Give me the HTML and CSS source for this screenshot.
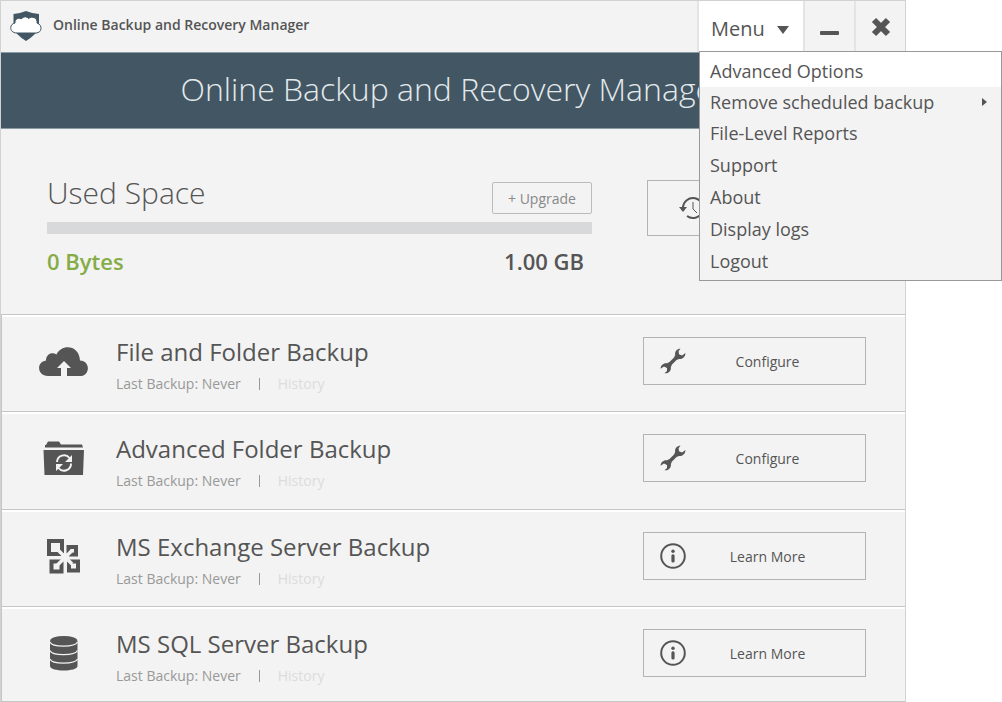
FILE: index.html
```html
<!DOCTYPE html>
<html lang="en">
<head>
<meta charset="utf-8">
<title>Online Backup and Recovery Manager</title>
<link rel="stylesheet" href="styles.css">
</head>
<body>
<svg class="defs" aria-hidden="true">
  <symbol id="wrench" viewBox="0 0 26 26">
    <path d="M20.500 .5 C17 .8 14.500 3.500 15.200 7 L14 9.500 L9.500 14 L7 15.200 C3.500 14.700 .8 17 .5 20.800 L4 18.600 L7 20 L7 23 L4.500 25.300 C8.500 25.800 11.300 23 10.900 19 L12 16.500 L16.500 12 L19 10.900 C22.500 11.500 25.300 9 25.500 5 L22 7.500 L19 6.200 L18.600 3.200 Z" fill="currentColor"/>
  </symbol>
  <symbol id="info" viewBox="0 0 26 26">
    <circle cx="13" cy="13" r="11.800" fill="none" stroke="currentColor" stroke-width="2"/>
    <circle cx="13" cy="8.300" r="1.700" fill="currentColor"/>
    <rect x="11.400" y="11.200" width="3.200" height="8.300" rx="1.500" fill="currentColor"/>
  </symbol>
</svg>

<div class="window">
  <header class="titlebar">
    <svg class="logo" viewBox="0 0 32 32" aria-hidden="true">
      <path d="M3.500 4 Q10 3.500 16 1 Q22 3.500 29 4 L29 18 Q27 24 16 31 Q5 24 3.500 18 Z" fill="#425763"/>
      <path d="M7 23 C-1 23 -1 14 5 13 C4.500 9 9 7 11 9 C14 6 17 6.500 18.500 8.500 C22 5.500 28 8 27 13 C33 15 32 23 26 23 Z" fill="#fff" stroke="#425763" stroke-width="1"/>
    </svg>
    <h1 class="app-name">Online Backup and Recovery Manager</h1>
    <div class="menu">
      <button class="menu-button" type="button" aria-expanded="true">Menu
        <svg class="caret" viewBox="0 0 12 8" aria-hidden="true"><path d="M0 0 H12 L6 8 Z" fill="currentColor"/></svg>
      </button>
      <ul class="menu-list">
        <li><button class="menu-item active" type="button">Advanced Options</button></li>
        <li><button class="menu-item submenu" type="button">Remove scheduled backup
          <svg class="arrow" viewBox="0 0 5 8" aria-hidden="true"><path d="M0 0 L5 4 L0 8 Z" fill="currentColor"/></svg></button></li>
        <li><button class="menu-item" type="button">File-Level Reports</button></li>
        <li><button class="menu-item" type="button">Support</button></li>
        <li><button class="menu-item" type="button">About</button></li>
        <li><button class="menu-item" type="button">Display logs</button></li>
        <li><button class="menu-item" type="button">Logout</button></li>
      </ul>
    </div>
    <button class="window-button" type="button" aria-label="Minimize">
      <svg viewBox="0 0 20 20" aria-hidden="true"><rect x="0" y="14" width="19" height="4" rx="1" fill="currentColor"/></svg>
    </button>
    <button class="window-button" type="button" aria-label="Close">
      <svg viewBox="0 0 20 20" aria-hidden="true"><path d="M3 3 L17 17 M17 3 L3 17" stroke="currentColor" stroke-width="6"/></svg>
    </button>
  </header>

  <div class="banner">Online Backup and Recovery Manager</div>

  <section class="usage">
    <div class="meter">
      <div class="meter-head">
        <h2 class="meter-title">Used Space</h2>
        <button class="upgrade" type="button">+ Upgrade</button>
      </div>
      <div class="track"></div>
      <div class="meter-values"><span class="used">0 Bytes</span><span class="total">1.00 GB</span></div>
    </div>
    <button class="restore" type="button" aria-label="Restore">
      <svg viewBox="0 0 26 24" aria-hidden="true">
        <path d="M4 12 A10 10 0 1 1 8 20" fill="none" stroke="currentColor" stroke-width="2"/>
        <path d="M0 11 H8 L4 16 Z" fill="currentColor"/>
        <path d="M14 6 V13 L18 17" fill="none" stroke="currentColor"/>
      </svg>
    </button>
  </section>

  <main class="jobs">
    <article class="job">
      <svg class="job-icon" viewBox="0 0 50 50" aria-hidden="true">
        <path d="M9 39 C-2 39 -3 25 7 23.500 C7 17 13 14.500 17.500 17.500 C22 7 40 7 41 23.500 C52 24 51 39 41 39 H28 V31 H32 L25 24 L18 31 H22 V39 Z" fill="currentColor"/>
      </svg>
      <div class="job-text">
        <h3 class="job-title">File and Folder Backup</h3>
        <p class="job-meta"><span>Last Backup: Never</span><span class="bar"></span><a class="history" href="#">History</a></p>
      </div>
      <button class="action" type="button"><svg viewBox="0 0 26 26" aria-hidden="true"><use href="#wrench"/></svg><span>Configure</span></button>
    </article>
    <article class="job">
      <svg class="job-icon" viewBox="0 0 50 50" aria-hidden="true">
        <path d="M6 13.500 V11 H7 L9 7.500 H20 L22 10.500 H43 L44 13.500 Z M4.500 16 H45 L44 41 H5.500 Z" fill="currentColor"/>
        <path d="M18 28 A7 7 0 0 1 30.500 24 M32 29.500 A7 7 0 0 1 19.500 34" fill="none" stroke="#f3f3f3" stroke-width="2"/>
        <path d="M33 21 V28 H26 Z M17 37 V30 H24 Z" fill="#f3f3f3"/>
      </svg>
      <div class="job-text">
        <h3 class="job-title">Advanced Folder Backup</h3>
        <p class="job-meta"><span>Last Backup: Never</span><span class="bar"></span><a class="history" href="#">History</a></p>
      </div>
      <button class="action" type="button"><svg viewBox="0 0 26 26" aria-hidden="true"><use href="#wrench"/></svg><span>Configure</span></button>
    </article>
    <article class="job">
      <svg class="job-icon" viewBox="0 0 50 50" aria-hidden="true">
        <path d="M10 9 H23 V22 H10 Z M29.500 15 H37 V22.500 H29.500 Z M12.500 29.500 H22.500 V39.500 H12.500 Z M30 29.500 H39 V38.500 H30 Z" fill="none" stroke="currentColor" stroke-width="4"/>
        <path d="M19 18 L33 32 M33 18.500 L18 33.500" stroke="#f3f3f3" stroke-width="3.500"/>
        <path d="M26 20 L31 25.500 L26 31 L20.500 25.500 Z" fill="#f3f3f3"/>
      </svg>
      <div class="job-text">
        <h3 class="job-title">MS Exchange Server Backup</h3>
        <p class="job-meta"><span>Last Backup: Never</span><span class="bar"></span><a class="history" href="#">History</a></p>
      </div>
      <button class="action" type="button"><svg viewBox="0 0 26 26" aria-hidden="true"><use href="#info"/></svg><span>Learn More</span></button>
    </article>
    <article class="job">
      <svg class="job-icon" viewBox="0 0 50 50" aria-hidden="true">
        <path d="M11 12 V37 C11 43 38.500 43 38.500 37 V12 Z" fill="currentColor"/>
        <ellipse cx="24.750" cy="11.500" rx="13.500" ry="4.500" fill="currentColor"/>
        <path d="M11 13 C13 18.500 36 18.500 38.500 13 M11 21.500 C13 27 36 27 38.500 21.500 M11 30 C13 35.500 36 35.500 38.500 30" fill="none" stroke="#f3f3f3" stroke-width="1.200"/>
      </svg>
      <div class="job-text">
        <h3 class="job-title">MS SQL Server Backup</h3>
        <p class="job-meta"><span>Last Backup: Never</span><span class="bar"></span><a class="history" href="#">History</a></p>
      </div>
      <button class="action" type="button"><svg viewBox="0 0 26 26" aria-hidden="true"><use href="#info"/></svg><span>Learn More</span></button>
    </article>
  </main>
</div>
</body>
</html>
```
FILE: styles.css
```css
* { box-sizing: border-box; }
body {
  margin: 0;
  background: #fff;
  color: #555;
  font-family: "Open Sans", "Noto Sans", sans-serif;
}
h1, h2, h3, p, ul { margin: 0; padding: 0; font-weight: 400; }
button { font: inherit; color: inherit; background: none; border: 0; padding: 0; }
svg { display: block; }
.defs { display: none; }

.window {
  display: flex;
  flex-direction: column;
  min-height: 100vh;
  margin-right: 96px;
  background: #f3f3f3;
  border: 1px solid #d2d2d2;
  border-bottom: 0;
}

.titlebar {
  display: flex;
  align-items: stretch;
  height: 51px;
}
.logo { width: 32px; height: 32px; margin: 9px 11px 0 9px; }
.app-name { flex: 1; font-size: 14px; font-weight: 600; line-height: 48px; white-space: nowrap; }
.menu { position: relative; width: 106px; background: #fff; border-left: 2px solid #e4e4e4; }
.menu-button {
  display: flex;
  align-items: center;
  gap: 12px;
  width: 100%;
  height: 100%;
  padding: 4px 0 0 12px;
  font-size: 20px;
}
.caret { width: 12px; height: 8px; margin-top: 2px; }
.window-button {
  display: grid;
  place-items: center;
  width: 51px;
  border-left: 2px solid #e4e4e4;
}
.window-button svg { width: 20px; height: 20px; }

.menu-list {
  position: absolute;
  z-index: 1;
  top: 50px;
  left: 0;
  width: 303px;
  padding-bottom: 3px;
  background: #f3f3f3;
  border: 1px solid #999;
  list-style: none;
}
.menu-item {
  display: flex;
  align-items: center;
  justify-content: space-between;
  width: 100%;
  height: 32px;
  padding: 0 14px 0 10px;
  font-size: 18px;
  text-align: left;
}
.menu-item.active { height: 35px; padding-top: 3px; background: #fff; }
.menu-item.submenu { height: 30px; }
.arrow { width: 5px; height: 8px; }

.banner {
  height: 77px;
  background: #425763;
  border: 1px solid #8b9ba3;
  border-width: 1px 0;
  color: #e4e9ec;
  font-size: 32px;
  font-weight: 300;
  line-height: 72px;
  text-align: center;
  white-space: nowrap;
}

.usage {
  display: flex;
  align-items: flex-start;
  justify-content: space-between;
  gap: 55px;
  height: 185px;
  padding: 42px 39px 0 46px;
}
.meter { flex: 1; }
.meter-head { display: flex; justify-content: space-between; align-items: flex-start; height: 51px; }
.meter-title { font-size: 30px; font-weight: 300; line-height: 44px; }
.upgrade {
  width: 100px;
  height: 32px;
  margin-top: 11px;
  border: 1px solid #bbb;
  border-radius: 2px;
  color: #888;
  font-size: 14px;
}
.track { height: 12px; background: #d8d9db; }
.meter-values {
  display: flex;
  justify-content: space-between;
  padding: 10px 8px 0 0;
  font-size: 22px;
  font-weight: 600;
  line-height: 34px;
}
.used { color: #86ac46; }
.restore {
  width: 219px;
  height: 56px;
  margin-top: 9px;
  padding-left: 31px;
  border: 1px solid #b3b3b3;
}
.restore svg { width: 26px; height: 24px; }

.jobs { display: flex; flex: 1; flex-direction: column; }
.job {
  display: flex;
  align-items: flex-start;
  height: 97px;
  padding: 22px 39px 0 37px;
  border: 1px solid #c6c6c6;
  border-width: 1px 0 0 1px;
  box-shadow: inset 0 2px #fff;
}
.job:nth-child(2) { height: 98px; }
.job:last-child { flex: 1; border-bottom-width: 1px; }
.job-icon { width: 50px; height: 50px; margin-right: 27px; }
.job-text { flex: 1; margin-top: -3px; }
.job-title { font-size: 24px; line-height: 36px; }
.job-meta {
  display: flex;
  align-items: center;
  gap: 18px;
  color: #999;
  font-size: 14px;
  line-height: 28px;
}
.bar { width: 1px; height: 12px; background: #999; }
.history { color: #dcdcdc; text-decoration: none; }
.action {
  display: flex;
  align-items: center;
  width: 223px;
  height: 48px;
  padding: 0 16px;
  border: 1px solid #b3b3b3;
  font-size: 14px;
}
.action svg { width: 26px; height: 26px; }
.action span { flex: 1; }
```
